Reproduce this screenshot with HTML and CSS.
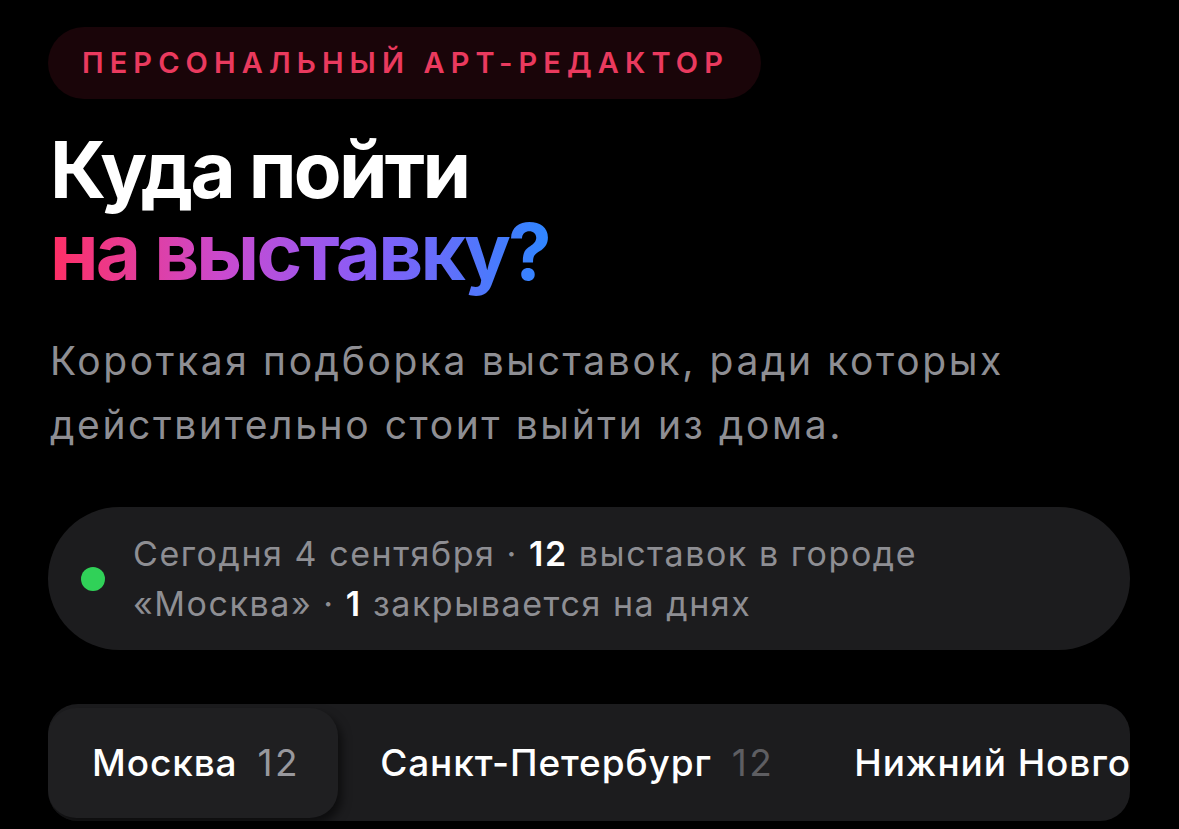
FILE: index.html
```html
<!DOCTYPE html>
<html lang="ru">
<head>
<meta charset="utf-8">
<title>Куда пойти на выставку?</title>
<link rel="stylesheet" href="styles.css">
</head>
<body>
<main class="page">
  <div class="badge">ПЕРСОНАЛЬНЫЙ АРТ-РЕДАКТОР</div>
  <h1 class="title">Куда пойти<br><span class="grad">на выставку?</span></h1>
  <p class="lead">Короткая подборка выставок, ради которых действительно стоит выйти из дома.</p>
  <div class="status">
    <span class="dot"></span>
    <p class="status-text">Сегодня 4 сентября · <b>12</b> выставок в городе «Москва» · <b>1</b> закрывается на днях</p>
  </div>
  <nav class="tabs">
    <div class="tab active"><span class="name">Москва</span><span class="count">12</span></div>
    <div class="tab"><span class="name">Санкт-Петербург</span><span class="count">12</span></div>
    <div class="tab"><span class="name">Нижний Новгород</span><span class="count">12</span></div>
  </nav>
</main>
</body>
</html>
```
FILE: styles.css
```css
html, body {
  margin: 0;
  background: #000;
  height: 100%;
  overflow: hidden;
}
body {
  font-family: Inter, "Noto Sans", sans-serif;
  color: #fff;
}
.page {
  padding: 27px 49px 0 48px;
}
.badge {
  display: inline-block;
  height: 72px;
  line-height: 72px;
  padding: 0 32px 0 34px;
  border-radius: 36px;
  background: #1a0509;
  color: #ea3a5e;
  font-size: 29px;
  font-weight: 600;
  letter-spacing: 0.21em;
}
.title {
  margin: 30px 0 0 2px;
  font-size: 78px;
  line-height: 82px;
  font-weight: 700;
  letter-spacing: -0.035em;
}
.grad {
  background: linear-gradient(90deg, #ff2f64 0%, #c94ad0 35%, #8b5cf6 62%, #2f86ff 100%);
  -webkit-background-clip: text;
  background-clip: text;
  color: transparent;
}
.lead {
  margin: 36px 0 0 2px;
  width: 1010px;
  font-size: 39px;
  line-height: 64px;
  color: #8e8e93;
  letter-spacing: 2.6px;
}
.status {
  margin-top: 50px;
  height: 143px;
  border-radius: 72px;
  background: #1c1c1e;
  display: flex;
  align-items: center;
  padding: 0 40px 0 33px;
  gap: 28px;
}
.dot {
  flex: none;
  width: 24px;
  height: 24px;
  border-radius: 50%;
  background: #30d158;
}
.status-text {
  margin: 0;
  max-width: 800px;
  font-size: 34px;
  line-height: 50px;
  color: #8e8e93;
  letter-spacing: 1.55px;
}
.status-text b {
  color: #fff;
  font-weight: 600;
}
.tabs {
  margin-top: 54px;
  height: 117px;
  border-radius: 30px;
  background: #1c1c1e;
  display: flex;
  align-items: center;
  overflow: hidden;
  padding: 0 2px 0 0;
}
.tab {
  flex: none;
  height: 110px;
  display: flex;
  align-items: center;
  gap: 20px;
  padding: 0 38px 0 42px;
  border-radius: 28px;
  font-size: 37px;
  font-weight: 500;
  white-space: nowrap;
  letter-spacing: 0.9px;
}
.tab.active {
  padding-left: 44px;
  background: #1f1f21;
  box-shadow: 4px 6px 10px rgba(0,0,0,0.55);
}
.count {
  font-weight: 400;
  color: #5e5e62;
  letter-spacing: 2.5px;
}
.tab.active .count {
  color: #98989d;
}
```
